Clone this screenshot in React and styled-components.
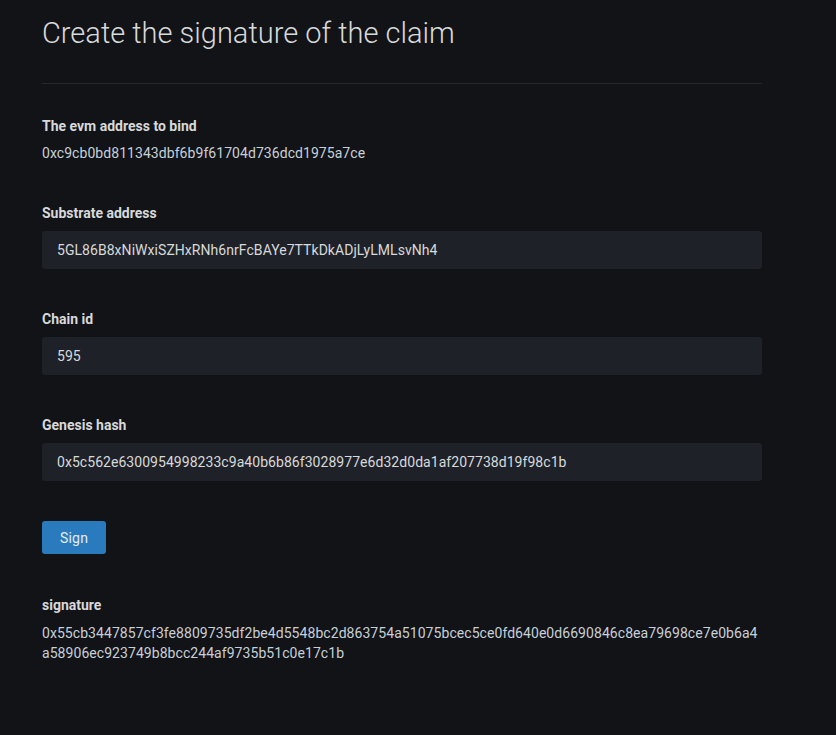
import React from 'react';
import styled, { createGlobalStyle } from 'styled-components';

const GlobalStyle = createGlobalStyle`
  html, body {
    margin: 0;
    padding: 0;
    background-color: #111317;
  }
  body {
    font-family: Roboto, "Liberation Sans", sans-serif;
    color: #d8d9da;
  }
  * {
    box-sizing: border-box;
  }
`;

const Page = styled.div`
  min-height: 735px;
  padding: 16px 42px 0;
  background-color: #111317;
`;
const Container = styled.div`
  width: 720px;
`;
const Title = styled.h1`
  margin: 0;
  font-size: 29px;
  font-weight: 300;
  line-height: 34px;
  color: #d8d9da;
`;
const Divider = styled.hr`
  margin: 33px 0 32px;
  border: 0;
  height: 1px;
  background-color: #24272c;
`;
const Field = styled.div`
  display: flex;
  flex-direction: column;
  margin-bottom: 40px;
`;
const Label = styled.label`
  font-size: 14px;
  font-weight: 700;
  line-height: 20px;
  color: #d8d9da;
  margin-bottom: ${props => (props.tight ? '7px' : '8px')};
`;
const Value = styled.div`
  font-size: 14px;
  line-height: 20px;
  letter-spacing: 0.06px;
  color: #c7d0d9;
  word-break: break-all;
`;
const Input = styled.input`
  width: 100%;
  height: 38px;
  padding: 0 15px;
  border: 0;
  border-radius: 3px;
  background-color: #1e2228;
  color: #d8d9da;
  font-family: Roboto, "Liberation Sans", sans-serif;
  font-size: 14px;
  letter-spacing: 0.05px;
  outline: none;
`;
const SignButton = styled.button`
  height: 33px;
  padding: 0 18px;
  border: 0;
  border-radius: 3px;
  background-color: #2a7bbd;
  color: #e4ebf2;
  font-family: Roboto, "Liberation Sans", sans-serif;
  font-size: 14px;
  letter-spacing: 0.2px;
  cursor: pointer;
`;
const ButtonRow = styled.div`
  display: flex;
  margin-bottom: 41px;
`;

function App() {
  return (
    <>
      <GlobalStyle />
      <Page>
        <Container>
          <Title>Create the signature of the claim</Title>
          <Divider />
          <Field>
            <Label tight>The evm address to bind</Label>
            <Value>0xc9cb0bd811343dbf6b9f61704d736dcd1975a7ce</Value>
          </Field>
          <Field>
            <Label>Substrate address</Label>
            <Input readOnly value='5GL86B8xNiWxiSZHxRNh6nrFcBAYe7TTkDkADjLyLMLsvNh4' />
          </Field>
          <Field>
            <Label>Chain id</Label>
            <Input readOnly value='595' />
          </Field>
          <Field>
            <Label>Genesis hash</Label>
            <Input readOnly value='0x5c562e6300954998233c9a40b6b86f3028977e6d32d0da1af207738d19f98c1b' />
          </Field>
          <ButtonRow>
            <SignButton>Sign</SignButton>
          </ButtonRow>
          <Field>
            <Label>signature</Label>
            <Value>0x55cb3447857cf3fe8809735df2be4d5548bc2d863754a51075bcec5ce0fd640e0d6690846c8ea79698ce7e0b6a4a58906ec923749b8bcc244af9735b51c0e17c1b</Value>
          </Field>
        </Container>
      </Page>
    </>
  );
}

export default App;
